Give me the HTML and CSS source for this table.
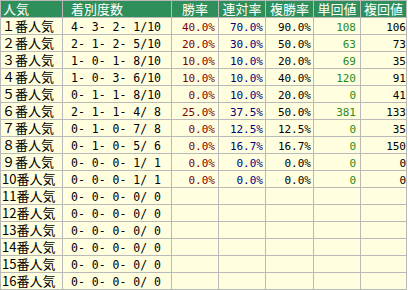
FILE: index.html
```html
<!DOCTYPE html>
<html lang="ja">
<head>
<meta charset="utf-8">
<title>人気別成績</title>
<link rel="stylesheet" href="styles.css">
</head>
<body>
<div class="grid">
  <div class="h h-left">人気</div><div class="h h-count">着別度数</div><div class="h">勝率</div><div class="h">連対率</div><div class="h">複勝率</div><div class="h">単回値</div><div class="h">複回値</div>

  <div class="c lbl">１番人気</div><div class="c cnt">4- 3- 2- 1/10</div><div class="c num win">40.0%</div><div class="c num ren">70.0%</div><div class="c num fuk">90.0%</div><div class="c num tan">108</div><div class="c num fkv">106</div>
  <div class="c lbl">２番人気</div><div class="c cnt">2- 1- 2- 5/10</div><div class="c num win">20.0%</div><div class="c num ren">30.0%</div><div class="c num fuk">50.0%</div><div class="c num tan">63</div><div class="c num fkv">73</div>
  <div class="c lbl">３番人気</div><div class="c cnt">1- 0- 1- 8/10</div><div class="c num win">10.0%</div><div class="c num ren">10.0%</div><div class="c num fuk">20.0%</div><div class="c num tan">69</div><div class="c num fkv">35</div>
  <div class="c lbl">４番人気</div><div class="c cnt">1- 0- 3- 6/10</div><div class="c num win">10.0%</div><div class="c num ren">10.0%</div><div class="c num fuk">40.0%</div><div class="c num tan">120</div><div class="c num fkv">91</div>
  <div class="c lbl">５番人気</div><div class="c cnt">0- 1- 1- 8/10</div><div class="c num win">0.0%</div><div class="c num ren">10.0%</div><div class="c num fuk">20.0%</div><div class="c num tan">0</div><div class="c num fkv">41</div>
  <div class="c lbl">６番人気</div><div class="c cnt">2- 1- 1- 4/ 8</div><div class="c num win">25.0%</div><div class="c num ren">37.5%</div><div class="c num fuk">50.0%</div><div class="c num tan">381</div><div class="c num fkv">133</div>
  <div class="c lbl">７番人気</div><div class="c cnt">0- 1- 0- 7/ 8</div><div class="c num win">0.0%</div><div class="c num ren">12.5%</div><div class="c num fuk">12.5%</div><div class="c num tan">0</div><div class="c num fkv">35</div>
  <div class="c lbl">８番人気</div><div class="c cnt">0- 1- 0- 5/ 6</div><div class="c num win">0.0%</div><div class="c num ren">16.7%</div><div class="c num fuk">16.7%</div><div class="c num tan">0</div><div class="c num fkv">150</div>
  <div class="c lbl">９番人気</div><div class="c cnt">0- 0- 0- 1/ 1</div><div class="c num win">0.0%</div><div class="c num ren">0.0%</div><div class="c num fuk">0.0%</div><div class="c num tan">0</div><div class="c num fkv">0</div>
  <div class="c lbl">10番人気</div><div class="c cnt">0- 0- 0- 1/ 1</div><div class="c num win">0.0%</div><div class="c num ren">0.0%</div><div class="c num fuk">0.0%</div><div class="c num tan">0</div><div class="c num fkv">0</div>
  <div class="c lbl">11番人気</div><div class="c cnt">0- 0- 0- 0/ 0</div><div class="c"></div><div class="c"></div><div class="c"></div><div class="c"></div><div class="c"></div>
  <div class="c lbl">12番人気</div><div class="c cnt">0- 0- 0- 0/ 0</div><div class="c"></div><div class="c"></div><div class="c"></div><div class="c"></div><div class="c"></div>
  <div class="c lbl">13番人気</div><div class="c cnt">0- 0- 0- 0/ 0</div><div class="c"></div><div class="c"></div><div class="c"></div><div class="c"></div><div class="c"></div>
  <div class="c lbl">14番人気</div><div class="c cnt">0- 0- 0- 0/ 0</div><div class="c"></div><div class="c"></div><div class="c"></div><div class="c"></div><div class="c"></div>
  <div class="c lbl">15番人気</div><div class="c cnt">0- 0- 0- 0/ 0</div><div class="c"></div><div class="c"></div><div class="c"></div><div class="c"></div><div class="c"></div>
  <div class="c lbl">16番人気</div><div class="c cnt">0- 0- 0- 0/ 0</div><div class="c"></div><div class="c"></div><div class="c"></div><div class="c"></div><div class="c"></div>
</div>
</body>
</html>
```
FILE: styles.css
```css
html, body {
  margin: 0;
  padding: 0;
  background: #ffffff;
}

.grid {
  display: grid;
  grid-template-columns: 61px 108px 46px 46px 47px 46px 45px;
  grid-auto-rows: 16px;
  gap: 1px;
  padding: 1px;
  width: max-content;
  background: #b9b9b9;
}

.h {
  background: #2f8f5b;
  color: #ffffff;
  font-family: "Noto Sans CJK JP", sans-serif;
  font-size: 13px;
  line-height: 16px;
  text-align: center;
  white-space: nowrap;
}

.h-left {
  text-align: left;
  padding-left: 2px;
}

.h-count {
  text-align: left;
  padding-left: 8px;
}

.c {
  background: #ffffe0;
  color: #000000;
  white-space: pre;
}

.lbl {
  font-family: "Noto Sans CJK JP", sans-serif;
  font-size: 13px;
  line-height: 16px;
  padding-left: 1px;
}

.cnt,
.num {
  font-family: "DejaVu Sans Mono", monospace;
  line-height: 11px;
  padding-top: 4px;
}

.cnt {
  font-size: 11.5px;
  padding-left: 8px;
}

.num {
  font-size: 11px;
  text-align: right;
  padding-right: 2px;
}

.win { color: #800000; padding-right: 3px; }
.ren { color: #000080; }
.fuk { color: #000000; }
.tan { color: #2a8a1e; padding-right: 4px; }
.fkv { color: #000000; padding-right: 0; }
```
